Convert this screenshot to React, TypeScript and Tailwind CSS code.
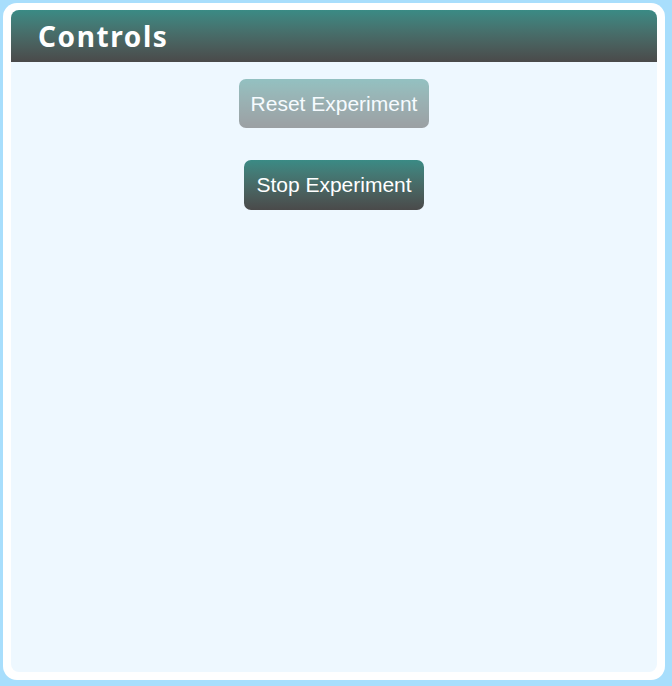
import React from "react";

const App = () => {
    return (
        <div className="h-[686px] w-[672px] bg-[#a8defc] pt-[3px] pl-[3px] pr-[7px] pb-[6px]">
            <div className="h-full bg-white rounded-[14px] px-2 pt-[7px] pb-2">
                <div className="h-full bg-[#eef8ff] rounded-[8px] flex flex-col">
                    <div className="h-[52px] rounded-t-[8px] bg-gradient-to-b from-[#3a8b85] to-[#4a4a4a] flex items-center pl-[27px]">
                        <h2
                            className="text-white text-[28px] font-bold tracking-[1.6px]"
                            style={{ fontFamily: '"Noto Sans", sans-serif' }}
                        >
                            Controls
                        </h2>
                    </div>
                    <div
                        className="flex flex-col items-center pt-[17px] gap-8"
                        style={{ fontFamily: '"Liberation Sans", Arial, sans-serif' }}
                    >
                        <button
                            type="button"
                            disabled
                            className="h-[49px] px-3 rounded-[7px] text-white text-[21px] bg-gradient-to-b from-[#3a8b85] to-[#4a4a4a] opacity-50"
                        >
                            Reset Experiment
                        </button>
                        <button
                            type="button"
                            className="h-[50px] px-3 rounded-[7px] text-white text-[21px] bg-gradient-to-b from-[#3a8b85] to-[#4a4a4a]"
                        >
                            Stop Experiment
                        </button>
                    </div>
                </div>
            </div>
        </div>
    );
};

export default App;
